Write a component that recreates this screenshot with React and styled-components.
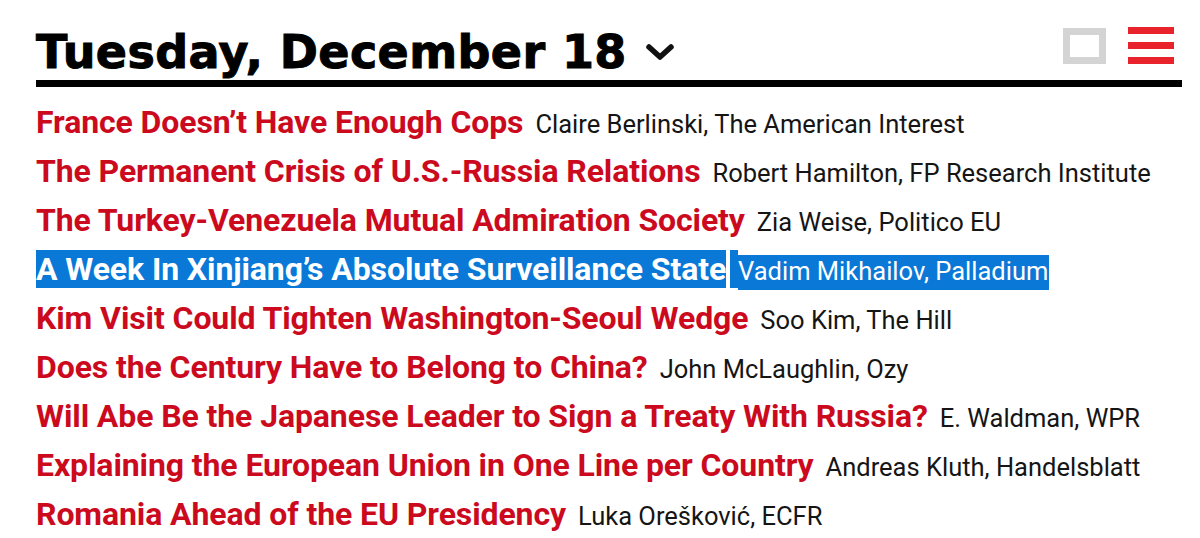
import styled, { createGlobalStyle } from 'styled-components'

const GlobalStyle = createGlobalStyle`
    body {
        margin: 0;
        background: #fff;
        font-family: Roboto, "Liberation Sans", sans-serif;
    }
`

const Page = styled.div`
    padding: 24px 18px 0 36px;
`

const Header = styled.header`
    display: flex;
    align-items: center;
    justify-content: space-between;
    height: 56px;
    border-bottom: 7px solid #000;
`

const DateTitle = styled.h1`
    display: flex;
    align-items: center;
    gap: 18px;
    margin: 0;
    font-family: "DejaVu Sans", "Liberation Sans", sans-serif;
    font-weight: 700;
    font-size: 46px;
    letter-spacing: 0.4px;
    -webkit-text-stroke: 1px #000;
    color: #000;
    line-height: 1;
`

const Tools = styled.div`
    display: flex;
    align-items: center;
    gap: 22px;
    margin-right: 8px;
    margin-bottom: 13px;
`

const BoxIcon = styled.div`
    width: 43px;
    height: 36px;
    box-sizing: border-box;
    border: 7px solid #d4d4d4;
`

const Burger = styled.div`
    display: flex;
    flex-direction: column;
    justify-content: space-between;
    width: 46px;
    height: 37px;

    span {
        display: block;
        height: 7px;
        background: #e8232b;
    }
`

const List = styled.ul`
    list-style: none;
    margin: 0;
    padding: 16px 0 0;
`

const Row = styled.li`
    display: flex;
    align-items: baseline;
    height: 49px;
    white-space: nowrap;
`

const Headline = styled.a`
    font-weight: 700;
    font-size: 32px;
    letter-spacing: -0.1px;
    color: ${p => (p.$selected ? '#fff' : '#cc0a1e')};
    background: ${p => (p.$selected ? '#0a78d7' : 'transparent')};
    text-decoration: none;
`

const Space = styled.span`
    white-space: pre;
    font-size: 32px;
    margin-left: 4px;
    background: ${p => (p.$selected ? '#0a78d7' : 'transparent')};
`

const Source = styled.span`
    font-size: 25.5px;
    color: ${p => (p.$selected ? '#fff' : '#151515')};
    background: ${p => (p.$selected ? '#0a78d7' : 'transparent')};
    padding: 1px 1px 4px 0;
`

const Chevron = () => (
    <svg width="30" height="20" viewBox="0 0 30 20">
        <path d="M4 5 L15 15 L26 5" fill="none" stroke="#111" strokeWidth="5.5" strokeLinecap="round" strokeLinejoin="round" />
    </svg>
)

const stories = [
    ['France Doesn’t Have Enough Cops', 'Claire Berlinski, The American Interest'],
    ['The Permanent Crisis of U.S.-Russia Relations', 'Robert Hamilton, FP Research Institute'],
    ['The Turkey-Venezuela Mutual Admiration Society', 'Zia Weise, Politico EU'],
    ['A Week In Xinjiang’s Absolute Surveillance State', 'Vadim Mikhailov, Palladium', true],
    ['Kim Visit Could Tighten Washington-Seoul Wedge', 'Soo Kim, The Hill'],
    ['Does the Century Have to Belong to China?', 'John McLaughlin, Ozy'],
    ['Will Abe Be the Japanese Leader to Sign a Treaty With Russia?', 'E. Waldman, WPR'],
    ['Explaining the European Union in One Line per Country', 'Andreas Kluth, Handelsblatt'],
    ['Romania Ahead of the EU Presidency', 'Luka Orešković, ECFR'],
]

export default function App() {
    return (
        <>
            <GlobalStyle />
            <Page>
                <Header>
                    <DateTitle>
                        Tuesday, December 18
                        <Chevron />
                    </DateTitle>
                    <Tools>
                        <BoxIcon />
                        <Burger>
                            <span />
                            <span />
                            <span />
                        </Burger>
                    </Tools>
                </Header>
                <List>
                    {stories.map(([title, source, selected]) => (
                        <Row key={title}>
                            <Headline href="#" $selected={selected}>{title}</Headline>
                            <Space $selected={selected}> </Space>
                            <Source $selected={selected}>{source}</Source>
                        </Row>
                    ))}
                </List>
            </Page>
        </>
    )
}
